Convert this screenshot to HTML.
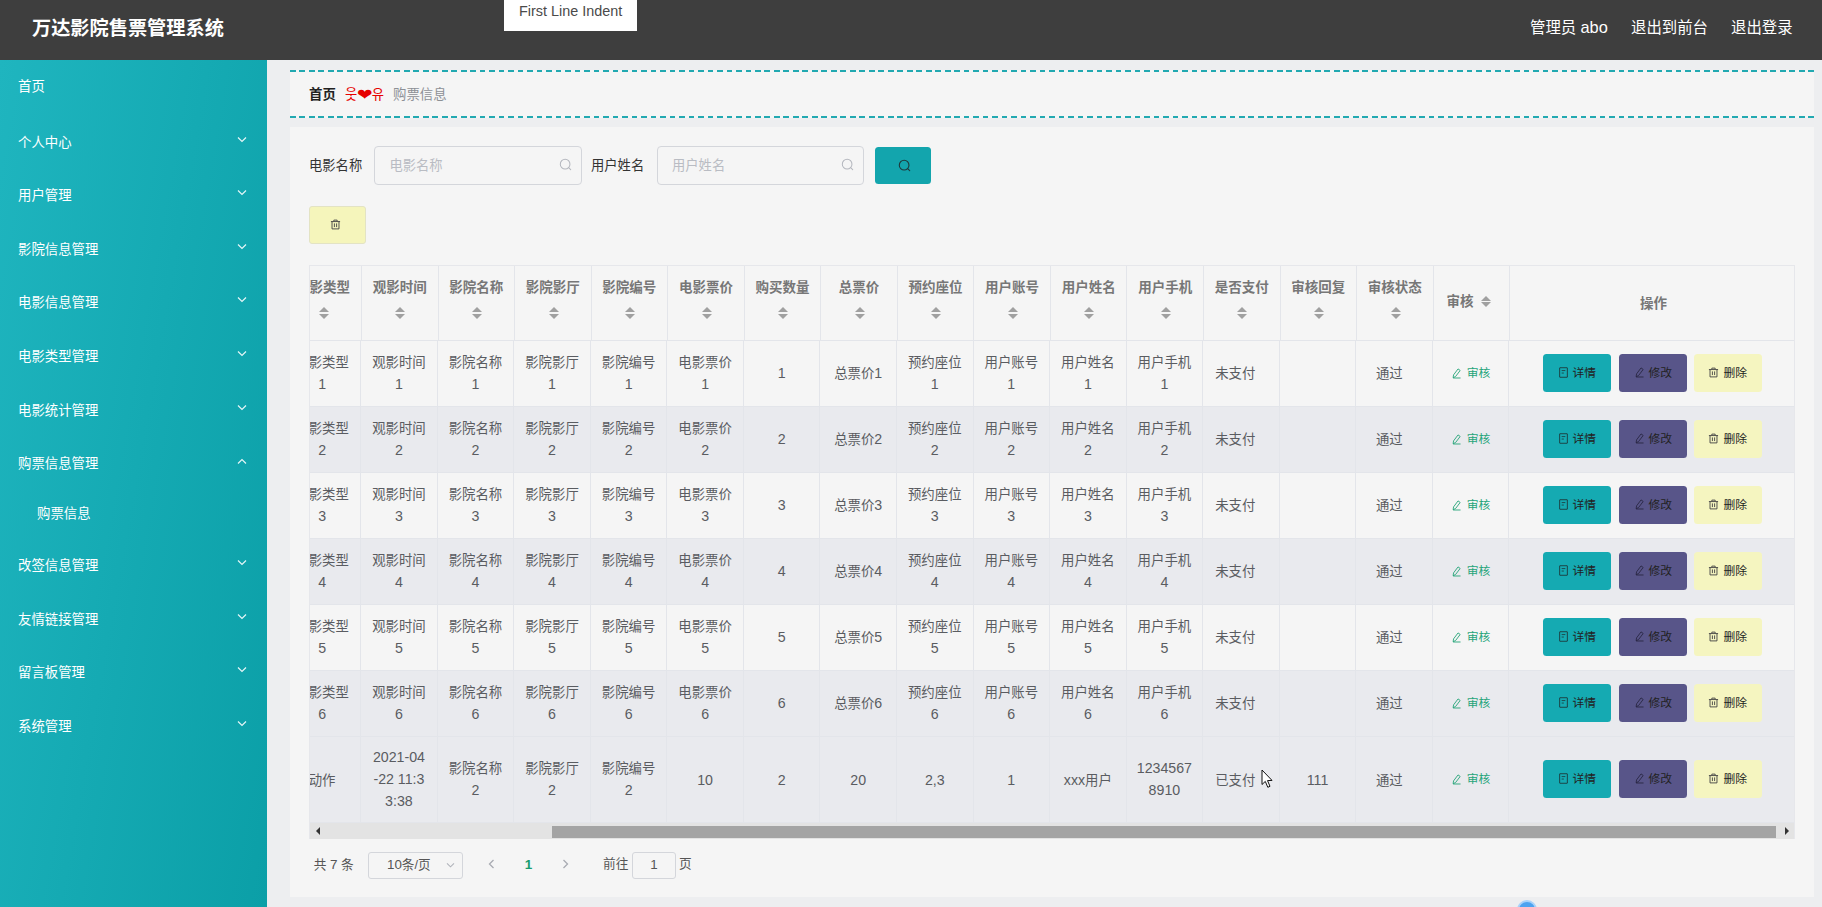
<!DOCTYPE html><html lang="zh-CN"><head><meta charset="utf-8"><title>万达影院售票管理系统</title><style>
*{box-sizing:border-box;margin:0;padding:0}
html,body{width:1822px;height:907px;overflow:hidden}
body{font-family:"Liberation Sans", "Noto Sans CJK SC", "NanumGothic", sans-serif;background:#edeef0;position:relative;color:#333;font-size:13.3px}
svg{display:block}
/* header */
#hd{position:absolute;left:0;top:0;width:1822px;height:60px;background:#3e3e3e}
#hd .title{position:absolute;left:32px;top:0;height:56px;line-height:57.6px;color:#fff;font-weight:700;font-size:19.2px;white-space:nowrap}
#hd .r{position:absolute;top:0;height:54px;line-height:55.4px;color:#fff;font-size:15.4px;white-space:nowrap}
#tip{position:absolute;left:504.1px;top:0;width:133px;height:31.2px;background:#fff;color:#4a4a4a;font-size:14.4px;line-height:22px;text-align:center;font-family:"Liberation Sans",sans-serif}
/* sidebar */
#sb{position:absolute;left:0;top:60px;width:267px;height:847px;background:linear-gradient(100deg,#1fb5bf 0%,#0b9fa7 100%);color:#fff}
#sb .it{position:relative;height:53.6px;line-height:57px;overflow:hidden;padding-left:18px;font-size:13.4px;white-space:nowrap}
#sb .sub{position:relative;height:48.3px;line-height:50.5px;overflow:hidden;padding-left:37px;font-size:13.4px;white-space:nowrap}
#sb .ar{position:absolute;left:237px;top:22px;width:10px;height:8px}
/* panels */
#bc{position:absolute;left:290px;top:70px;width:1524px;height:48px;background:#f5f5f5}
#bc i{position:absolute;left:0;width:1524px;height:2px;background:repeating-linear-gradient(90deg,#22a9b1 0,#22a9b1 5.7px,transparent 5.7px,transparent 9.49px)}
#bc .t{position:absolute;top:1.6px;height:44px;line-height:45.4px;font-size:13.4px;white-space:nowrap}
#mp{position:absolute;left:290px;top:127px;width:1524px;height:770px;background:#f5f5f5}
.lab{position:absolute;font-size:13.3px;color:#333;white-space:nowrap;height:37px;line-height:37px;top:147px}
.inp{position:absolute;top:146.2px;height:38.8px;border:1px solid #d4d6db;border-radius:4px;background:#f5f5f5;color:#b9bcc3;font-size:13.3px;line-height:37.4px;padding-left:14px;white-space:nowrap}
.inp svg{position:absolute;right:9.4px;top:10.8px}
#sbtn{position:absolute;left:874.7px;top:146.8px;width:56.7px;height:37px;background:#13a5ad;border-radius:3.5px}
#dbtn{position:absolute;left:309.4px;top:206.4px;width:56.4px;height:37.4px;background:#f5f5bb;border:1px solid #e3e3c4;border-radius:3px}
/* table */
#tw{position:absolute;left:309px;top:265px;width:1486px;height:574px;overflow:hidden;border-top:1px solid #e6e7eb;border-left:1px solid #e6e7eb;border-right:1px solid #e6e7eb}
.tb{position:absolute;left:-25.1px;top:0;border-collapse:collapse;table-layout:fixed;width:1510.6px}
#tbb{left:-25.9px;top:73.5px}
#tbb tr:first-child td{border-top:1px solid #e3e5ea}
.tb th,.tb td{border-right:1px solid #e3e5ea;border-bottom:1px solid #e3e5ea;text-align:center;vertical-align:middle;font-size:13.5px;line-height:21.6px;padding:0 8px;overflow:hidden}
.tb th{height:74px;color:#777;font-weight:700;background:#f5f5f5;white-space:nowrap}
.tb td{color:#5a5c61;font-weight:400;font-size:13.4px;padding:1.4px 8.5px 0 8.5px;line-height:21.9px}
.tb tr.s td{background:#e9eaee}
.tb tr.n td{background:#f5f5f5}
.tb tr.r td{height:66px}
.tb tr.l td{height:86px}
.so{display:block;width:10.2px;height:12px;margin:8.4px auto 0;position:relative;left:0.8px}
.so i{display:block;width:0;height:0;border-left:5.1px solid transparent;border-right:5.1px solid transparent}
.so i.u{border-bottom:5.2px solid #a0a0a0;margin-bottom:1.5px}
.so i.d{border-top:5.2px solid #a0a0a0}
.d{font-size:1.06em}
.tb td.np{padding:0 8px}
.btns{display:flex;justify-content:flex-start;padding-left:25.6px}
.b{flex:0 0 67.8px;width:67.8px;height:38px;border-radius:3.5px;margin-right:7.6px;display:flex;align-items:center;justify-content:center;font-size:11.8px;color:#222;white-space:nowrap;padding-top:2.6px;position:relative;top:0px}
.b svg{margin-right:4px;position:relative;top:-2px}
.b1{background:#15aab2;margin-right:8.2px}
.b2{background:#585589;margin-right:7.1px}
.b3{background:#f5f5c0}
.chk{color:#27a57a;font-size:11.8px;display:flex;align-items:center;justify-content:center;white-space:nowrap;position:relative;top:1.3px}
.chk svg{margin-right:5px;position:relative;top:-1.2px}
/* scrollbar */
#hs{position:absolute;left:0;top:557px;width:1486px;height:17px;background:#e3e3e3}
#hs .th{position:absolute;left:242px;top:2.6px;width:1224.3px;height:12px;background:#a4a4a4}
/* pagination */
.pg{position:absolute;font-size:12.7px;color:#555;white-space:nowrap;height:27px;line-height:27px;top:851.1px}
.box{position:absolute;top:852px;height:26.6px;border:1px solid #d4d6db;border-radius:3px;background:#f5f5f5;font-size:12.6px;color:#555;line-height:23.2px;text-align:center}
</style></head><body>
<div id="hd"><div class="title">万达影院售票管理系统</div><div class="r" style="left:1530px">管理员 <span style="font-size:16.4px">abo</span></div><div class="r" style="left:1631px">退出到前台</div><div class="r" style="left:1731px">退出登录</div><div id="tip">First Line Indent</div></div>
<div id="sb">
<div class="it" style="line-height:54.2px">首页</div>
<div class="it">个人中心<svg class="ar" viewBox="0 0 10 8" width="10" height="8"><path d="M1 1.5 L5 5.5 L9 1.5" fill="none" stroke="#e6f6f7" stroke-width="1.2"/></svg></div>
<div class="it">用户管理<svg class="ar" viewBox="0 0 10 8" width="10" height="8"><path d="M1 1.5 L5 5.5 L9 1.5" fill="none" stroke="#e6f6f7" stroke-width="1.2"/></svg></div>
<div class="it">影院信息管理<svg class="ar" viewBox="0 0 10 8" width="10" height="8"><path d="M1 1.5 L5 5.5 L9 1.5" fill="none" stroke="#e6f6f7" stroke-width="1.2"/></svg></div>
<div class="it">电影信息管理<svg class="ar" viewBox="0 0 10 8" width="10" height="8"><path d="M1 1.5 L5 5.5 L9 1.5" fill="none" stroke="#e6f6f7" stroke-width="1.2"/></svg></div>
<div class="it">电影类型管理<svg class="ar" viewBox="0 0 10 8" width="10" height="8"><path d="M1 1.5 L5 5.5 L9 1.5" fill="none" stroke="#e6f6f7" stroke-width="1.2"/></svg></div>
<div class="it">电影统计管理<svg class="ar" viewBox="0 0 10 8" width="10" height="8"><path d="M1 1.5 L5 5.5 L9 1.5" fill="none" stroke="#e6f6f7" stroke-width="1.2"/></svg></div>
<div class="it">购票信息管理<svg class="ar" viewBox="0 0 10 8" width="10" height="8"><path d="M1 6.5 L5 2.5 L9 6.5" fill="none" stroke="#e6f6f7" stroke-width="1.2"/></svg></div>
<div class="sub">购票信息</div>
<div class="it">改签信息管理<svg class="ar" viewBox="0 0 10 8" width="10" height="8"><path d="M1 1.5 L5 5.5 L9 1.5" fill="none" stroke="#e6f6f7" stroke-width="1.2"/></svg></div>
<div class="it">友情链接管理<svg class="ar" viewBox="0 0 10 8" width="10" height="8"><path d="M1 1.5 L5 5.5 L9 1.5" fill="none" stroke="#e6f6f7" stroke-width="1.2"/></svg></div>
<div class="it">留言板管理<svg class="ar" viewBox="0 0 10 8" width="10" height="8"><path d="M1 1.5 L5 5.5 L9 1.5" fill="none" stroke="#e6f6f7" stroke-width="1.2"/></svg></div>
<div class="it">系统管理<svg class="ar" viewBox="0 0 10 8" width="10" height="8"><path d="M1 1.5 L5 5.5 L9 1.5" fill="none" stroke="#e6f6f7" stroke-width="1.2"/></svg></div>
</div>
<div id="bc"><i style="top:0"></i><i style="bottom:0"></i><span class="t" style="left:19px;color:#222;font-weight:700">首页</span><span class="t" style="left:55px;color:#e60000;font-weight:400;font-size:13.3px;letter-spacing:0">웃<span style="display:inline-block;font-size:18px;line-height:1;transform:scale(1.04,0.9);position:relative;top:2.4px;margin:0 -0.3px">❤</span>유</span><span class="t" style="left:103px;color:#8d9096">购票信息</span></div>
<div id="mp"></div>
<div class="lab" style="left:309px">电影名称</div>
<div class="inp" style="left:374.4px;width:207.7px">电影名称<svg width="13" height="13" viewBox="0 0 14 14"><circle cx="6.6" cy="6.6" r="5.2" fill="none" stroke="#b4b7be" stroke-width="1.1"/><path d="M10.4 10.4 L12.6 12.6" stroke="#b4b7be" stroke-width="1.1" stroke-linecap="round"/></svg></div>
<div class="lab" style="left:591px">用户姓名</div>
<div class="inp" style="left:657px;width:207px">用户姓名<svg width="13" height="13" viewBox="0 0 14 14"><circle cx="6.6" cy="6.6" r="5.2" fill="none" stroke="#b4b7be" stroke-width="1.1"/><path d="M10.4 10.4 L12.6 12.6" stroke="#b4b7be" stroke-width="1.1" stroke-linecap="round"/></svg></div>
<div id="sbtn"><div style="position:absolute;left:23px;top:12px"><svg width="13" height="13" viewBox="0 0 14 14"><circle cx="6.6" cy="6.6" r="5.2" fill="none" stroke="#1f3a3c" stroke-width="1.2"/><path d="M10.4 10.4 L12.6 12.6" stroke="#1f3a3c" stroke-width="1.2" stroke-linecap="round"/></svg></div></div>
<div id="dbtn"><div style="position:absolute;left:20px;top:12px"><svg width="11" height="11" viewBox="0 0 12 12" fill="none" stroke="#444" stroke-width="1"><path d="M1 2.8 H11"/><path d="M4.2 2.6 V1.2 H7.8 V2.6"/><path d="M2.2 2.8 V10.8 H9.8 V2.8"/><path d="M4.8 4.8 V8.8 M7.2 4.8 V8.8"/></svg></div></div>
<div id="tw"><table id="tbh" class="tb"><colgroup><col style="width:76.55px"><col style="width:76.55px"><col style="width:76.55px"><col style="width:76.55px"><col style="width:76.55px"><col style="width:76.55px"><col style="width:76.55px"><col style="width:76.55px"><col style="width:76.55px"><col style="width:76.55px"><col style="width:76.55px"><col style="width:76.55px"><col style="width:76.55px"><col style="width:76.55px"><col style="width:76.55px"><col style="width:76.55px"><col style="width:285.8px"></colgroup>
<thead><tr>
<th><div style="margin-top:-9px">电影类型<span class="so"><i class="u"></i><i class="d"></i></span></div></th>
<th><div style="margin-top:-9px">观影时间<span class="so"><i class="u"></i><i class="d"></i></span></div></th>
<th><div style="margin-top:-9px">影院名称<span class="so"><i class="u"></i><i class="d"></i></span></div></th>
<th><div style="margin-top:-9px">影院影厅<span class="so"><i class="u"></i><i class="d"></i></span></div></th>
<th><div style="margin-top:-9px">影院编号<span class="so"><i class="u"></i><i class="d"></i></span></div></th>
<th><div style="margin-top:-9px">电影票价<span class="so"><i class="u"></i><i class="d"></i></span></div></th>
<th><div style="margin-top:-9px">购买数量<span class="so"><i class="u"></i><i class="d"></i></span></div></th>
<th><div style="margin-top:-9px">总票价<span class="so"><i class="u"></i><i class="d"></i></span></div></th>
<th><div style="margin-top:-9px">预约座位<span class="so"><i class="u"></i><i class="d"></i></span></div></th>
<th><div style="margin-top:-9px">用户账号<span class="so"><i class="u"></i><i class="d"></i></span></div></th>
<th><div style="margin-top:-9px">用户姓名<span class="so"><i class="u"></i><i class="d"></i></span></div></th>
<th><div style="margin-top:-9px">用户手机<span class="so"><i class="u"></i><i class="d"></i></span></div></th>
<th><div style="margin-top:-9px">是否支付<span class="so"><i class="u"></i><i class="d"></i></span></div></th>
<th><div style="margin-top:-9px">审核回复<span class="so"><i class="u"></i><i class="d"></i></span></div></th>
<th><div style="margin-top:-9px">审核状态<span class="so"><i class="u"></i><i class="d"></i></span></div></th>
<th><div style="display:flex;align-items:center;justify-content:flex-start;padding-left:5px;margin-top:-2px">审核<span class="so" style="margin:0 0 0 7px"><i class="u"></i><i class="d"></i></span></div></th>
<th><div style="padding:1.4px 0 0 2px">操作</div></th></tr></thead></table>
<table id="tbb" class="tb"><colgroup><col style="width:76.55px"><col style="width:76.55px"><col style="width:76.55px"><col style="width:76.55px"><col style="width:76.55px"><col style="width:76.55px"><col style="width:76.55px"><col style="width:76.55px"><col style="width:76.55px"><col style="width:76.55px"><col style="width:76.55px"><col style="width:76.55px"><col style="width:76.55px"><col style="width:76.55px"><col style="width:76.55px"><col style="width:76.55px"><col style="width:285.8px"></colgroup><tbody>
<tr class="r n">
<td>电影类型<br><span class="d">1</span></td>
<td>观影时间<br><span class="d">1</span></td>
<td>影院名称<br><span class="d">1</span></td>
<td>影院影厅<br><span class="d">1</span></td>
<td>影院编号<br><span class="d">1</span></td>
<td>电影票价<br><span class="d">1</span></td>
<td><span class="d">1</span></td>
<td>总票价<span class="d">1</span></td>
<td>预约座位<br><span class="d">1</span></td>
<td>用户账号<br><span class="d">1</span></td>
<td>用户姓名<br><span class="d">1</span></td>
<td>用户手机<br><span class="d">1</span></td>
<td style="text-align:left;padding-left:12px">未支付</td><td></td><td style="padding-right:18px">通过</td>
<td class="np"><div class="chk"><svg width="11" height="11" viewBox="0 0 12 12" fill="none" stroke="#27a57a" stroke-width="1" stroke-linejoin="round"><path d="M7.7 1 L10 2.7 L5 9.3 L2.3 10.6 L2.8 7.5 Z"/><path d="M2.3 10.9 H10.4"/></svg>审核</div></td>
<td class="np"><div class="btns"><div class="b b1"><svg width="11" height="11" viewBox="0 0 12 12" fill="none" stroke="#1d3b3d" stroke-width="1"><rect x="1.8" y="0.8" width="8.4" height="10.4" rx="0.3"/><path d="M4 3.9 H8 M4 6.6 H6.4" stroke-width="0.9"/></svg>详情</div><div class="b b2"><svg width="11" height="11" viewBox="0 0 12 12" fill="none" stroke="#2a2744" stroke-width="1" stroke-linejoin="round"><path d="M7.7 1 L10 2.7 L5 9.3 L2.3 10.6 L2.8 7.5 Z"/><path d="M2.3 10.9 H10.4"/></svg>修改</div><div class="b b3"><svg width="11" height="11" viewBox="0 0 12 12" fill="none" stroke="#444" stroke-width="1"><path d="M1 2.8 H11"/><path d="M4.2 2.6 V1.2 H7.8 V2.6"/><path d="M2.2 2.8 V10.8 H9.8 V2.8"/><path d="M4.8 4.8 V8.8 M7.2 4.8 V8.8"/></svg>删除</div></div></td>
</tr>
<tr class="r s">
<td>电影类型<br><span class="d">2</span></td>
<td>观影时间<br><span class="d">2</span></td>
<td>影院名称<br><span class="d">2</span></td>
<td>影院影厅<br><span class="d">2</span></td>
<td>影院编号<br><span class="d">2</span></td>
<td>电影票价<br><span class="d">2</span></td>
<td><span class="d">2</span></td>
<td>总票价<span class="d">2</span></td>
<td>预约座位<br><span class="d">2</span></td>
<td>用户账号<br><span class="d">2</span></td>
<td>用户姓名<br><span class="d">2</span></td>
<td>用户手机<br><span class="d">2</span></td>
<td style="text-align:left;padding-left:12px">未支付</td><td></td><td style="padding-right:18px">通过</td>
<td class="np"><div class="chk"><svg width="11" height="11" viewBox="0 0 12 12" fill="none" stroke="#27a57a" stroke-width="1" stroke-linejoin="round"><path d="M7.7 1 L10 2.7 L5 9.3 L2.3 10.6 L2.8 7.5 Z"/><path d="M2.3 10.9 H10.4"/></svg>审核</div></td>
<td class="np"><div class="btns"><div class="b b1"><svg width="11" height="11" viewBox="0 0 12 12" fill="none" stroke="#1d3b3d" stroke-width="1"><rect x="1.8" y="0.8" width="8.4" height="10.4" rx="0.3"/><path d="M4 3.9 H8 M4 6.6 H6.4" stroke-width="0.9"/></svg>详情</div><div class="b b2"><svg width="11" height="11" viewBox="0 0 12 12" fill="none" stroke="#2a2744" stroke-width="1" stroke-linejoin="round"><path d="M7.7 1 L10 2.7 L5 9.3 L2.3 10.6 L2.8 7.5 Z"/><path d="M2.3 10.9 H10.4"/></svg>修改</div><div class="b b3"><svg width="11" height="11" viewBox="0 0 12 12" fill="none" stroke="#444" stroke-width="1"><path d="M1 2.8 H11"/><path d="M4.2 2.6 V1.2 H7.8 V2.6"/><path d="M2.2 2.8 V10.8 H9.8 V2.8"/><path d="M4.8 4.8 V8.8 M7.2 4.8 V8.8"/></svg>删除</div></div></td>
</tr>
<tr class="r n">
<td>电影类型<br><span class="d">3</span></td>
<td>观影时间<br><span class="d">3</span></td>
<td>影院名称<br><span class="d">3</span></td>
<td>影院影厅<br><span class="d">3</span></td>
<td>影院编号<br><span class="d">3</span></td>
<td>电影票价<br><span class="d">3</span></td>
<td><span class="d">3</span></td>
<td>总票价<span class="d">3</span></td>
<td>预约座位<br><span class="d">3</span></td>
<td>用户账号<br><span class="d">3</span></td>
<td>用户姓名<br><span class="d">3</span></td>
<td>用户手机<br><span class="d">3</span></td>
<td style="text-align:left;padding-left:12px">未支付</td><td></td><td style="padding-right:18px">通过</td>
<td class="np"><div class="chk"><svg width="11" height="11" viewBox="0 0 12 12" fill="none" stroke="#27a57a" stroke-width="1" stroke-linejoin="round"><path d="M7.7 1 L10 2.7 L5 9.3 L2.3 10.6 L2.8 7.5 Z"/><path d="M2.3 10.9 H10.4"/></svg>审核</div></td>
<td class="np"><div class="btns"><div class="b b1"><svg width="11" height="11" viewBox="0 0 12 12" fill="none" stroke="#1d3b3d" stroke-width="1"><rect x="1.8" y="0.8" width="8.4" height="10.4" rx="0.3"/><path d="M4 3.9 H8 M4 6.6 H6.4" stroke-width="0.9"/></svg>详情</div><div class="b b2"><svg width="11" height="11" viewBox="0 0 12 12" fill="none" stroke="#2a2744" stroke-width="1" stroke-linejoin="round"><path d="M7.7 1 L10 2.7 L5 9.3 L2.3 10.6 L2.8 7.5 Z"/><path d="M2.3 10.9 H10.4"/></svg>修改</div><div class="b b3"><svg width="11" height="11" viewBox="0 0 12 12" fill="none" stroke="#444" stroke-width="1"><path d="M1 2.8 H11"/><path d="M4.2 2.6 V1.2 H7.8 V2.6"/><path d="M2.2 2.8 V10.8 H9.8 V2.8"/><path d="M4.8 4.8 V8.8 M7.2 4.8 V8.8"/></svg>删除</div></div></td>
</tr>
<tr class="r s">
<td>电影类型<br><span class="d">4</span></td>
<td>观影时间<br><span class="d">4</span></td>
<td>影院名称<br><span class="d">4</span></td>
<td>影院影厅<br><span class="d">4</span></td>
<td>影院编号<br><span class="d">4</span></td>
<td>电影票价<br><span class="d">4</span></td>
<td><span class="d">4</span></td>
<td>总票价<span class="d">4</span></td>
<td>预约座位<br><span class="d">4</span></td>
<td>用户账号<br><span class="d">4</span></td>
<td>用户姓名<br><span class="d">4</span></td>
<td>用户手机<br><span class="d">4</span></td>
<td style="text-align:left;padding-left:12px">未支付</td><td></td><td style="padding-right:18px">通过</td>
<td class="np"><div class="chk"><svg width="11" height="11" viewBox="0 0 12 12" fill="none" stroke="#27a57a" stroke-width="1" stroke-linejoin="round"><path d="M7.7 1 L10 2.7 L5 9.3 L2.3 10.6 L2.8 7.5 Z"/><path d="M2.3 10.9 H10.4"/></svg>审核</div></td>
<td class="np"><div class="btns"><div class="b b1"><svg width="11" height="11" viewBox="0 0 12 12" fill="none" stroke="#1d3b3d" stroke-width="1"><rect x="1.8" y="0.8" width="8.4" height="10.4" rx="0.3"/><path d="M4 3.9 H8 M4 6.6 H6.4" stroke-width="0.9"/></svg>详情</div><div class="b b2"><svg width="11" height="11" viewBox="0 0 12 12" fill="none" stroke="#2a2744" stroke-width="1" stroke-linejoin="round"><path d="M7.7 1 L10 2.7 L5 9.3 L2.3 10.6 L2.8 7.5 Z"/><path d="M2.3 10.9 H10.4"/></svg>修改</div><div class="b b3"><svg width="11" height="11" viewBox="0 0 12 12" fill="none" stroke="#444" stroke-width="1"><path d="M1 2.8 H11"/><path d="M4.2 2.6 V1.2 H7.8 V2.6"/><path d="M2.2 2.8 V10.8 H9.8 V2.8"/><path d="M4.8 4.8 V8.8 M7.2 4.8 V8.8"/></svg>删除</div></div></td>
</tr>
<tr class="r n">
<td>电影类型<br><span class="d">5</span></td>
<td>观影时间<br><span class="d">5</span></td>
<td>影院名称<br><span class="d">5</span></td>
<td>影院影厅<br><span class="d">5</span></td>
<td>影院编号<br><span class="d">5</span></td>
<td>电影票价<br><span class="d">5</span></td>
<td><span class="d">5</span></td>
<td>总票价<span class="d">5</span></td>
<td>预约座位<br><span class="d">5</span></td>
<td>用户账号<br><span class="d">5</span></td>
<td>用户姓名<br><span class="d">5</span></td>
<td>用户手机<br><span class="d">5</span></td>
<td style="text-align:left;padding-left:12px">未支付</td><td></td><td style="padding-right:18px">通过</td>
<td class="np"><div class="chk"><svg width="11" height="11" viewBox="0 0 12 12" fill="none" stroke="#27a57a" stroke-width="1" stroke-linejoin="round"><path d="M7.7 1 L10 2.7 L5 9.3 L2.3 10.6 L2.8 7.5 Z"/><path d="M2.3 10.9 H10.4"/></svg>审核</div></td>
<td class="np"><div class="btns"><div class="b b1"><svg width="11" height="11" viewBox="0 0 12 12" fill="none" stroke="#1d3b3d" stroke-width="1"><rect x="1.8" y="0.8" width="8.4" height="10.4" rx="0.3"/><path d="M4 3.9 H8 M4 6.6 H6.4" stroke-width="0.9"/></svg>详情</div><div class="b b2"><svg width="11" height="11" viewBox="0 0 12 12" fill="none" stroke="#2a2744" stroke-width="1" stroke-linejoin="round"><path d="M7.7 1 L10 2.7 L5 9.3 L2.3 10.6 L2.8 7.5 Z"/><path d="M2.3 10.9 H10.4"/></svg>修改</div><div class="b b3"><svg width="11" height="11" viewBox="0 0 12 12" fill="none" stroke="#444" stroke-width="1"><path d="M1 2.8 H11"/><path d="M4.2 2.6 V1.2 H7.8 V2.6"/><path d="M2.2 2.8 V10.8 H9.8 V2.8"/><path d="M4.8 4.8 V8.8 M7.2 4.8 V8.8"/></svg>删除</div></div></td>
</tr>
<tr class="r s">
<td>电影类型<br><span class="d">6</span></td>
<td>观影时间<br><span class="d">6</span></td>
<td>影院名称<br><span class="d">6</span></td>
<td>影院影厅<br><span class="d">6</span></td>
<td>影院编号<br><span class="d">6</span></td>
<td>电影票价<br><span class="d">6</span></td>
<td><span class="d">6</span></td>
<td>总票价<span class="d">6</span></td>
<td>预约座位<br><span class="d">6</span></td>
<td>用户账号<br><span class="d">6</span></td>
<td>用户姓名<br><span class="d">6</span></td>
<td>用户手机<br><span class="d">6</span></td>
<td style="text-align:left;padding-left:12px">未支付</td><td></td><td style="padding-right:18px">通过</td>
<td class="np"><div class="chk"><svg width="11" height="11" viewBox="0 0 12 12" fill="none" stroke="#27a57a" stroke-width="1" stroke-linejoin="round"><path d="M7.7 1 L10 2.7 L5 9.3 L2.3 10.6 L2.8 7.5 Z"/><path d="M2.3 10.9 H10.4"/></svg>审核</div></td>
<td class="np"><div class="btns"><div class="b b1"><svg width="11" height="11" viewBox="0 0 12 12" fill="none" stroke="#1d3b3d" stroke-width="1"><rect x="1.8" y="0.8" width="8.4" height="10.4" rx="0.3"/><path d="M4 3.9 H8 M4 6.6 H6.4" stroke-width="0.9"/></svg>详情</div><div class="b b2"><svg width="11" height="11" viewBox="0 0 12 12" fill="none" stroke="#2a2744" stroke-width="1" stroke-linejoin="round"><path d="M7.7 1 L10 2.7 L5 9.3 L2.3 10.6 L2.8 7.5 Z"/><path d="M2.3 10.9 H10.4"/></svg>修改</div><div class="b b3"><svg width="11" height="11" viewBox="0 0 12 12" fill="none" stroke="#444" stroke-width="1"><path d="M1 2.8 H11"/><path d="M4.2 2.6 V1.2 H7.8 V2.6"/><path d="M2.2 2.8 V10.8 H9.8 V2.8"/><path d="M4.8 4.8 V8.8 M7.2 4.8 V8.8"/></svg>删除</div></div></td>
</tr>
<tr class="l s">
<td style="padding-top:3px">动作</td>
<td><span class="d">2021-04</span><br><span class="d">-22 11:3</span><br><span class="d">3:38</span></td>
<td>影院名称<br><span class="d">2</span></td>
<td>影院影厅<br><span class="d">2</span></td>
<td>影院编号<br><span class="d">2</span></td>
<td style="padding-top:3px"><span class="d">10</span></td>
<td style="padding-top:3px"><span class="d">2</span></td>
<td style="padding-top:3px"><span class="d">20</span></td>
<td style="padding-top:3px"><span class="d">2,3</span></td>
<td style="padding-top:3px"><span class="d">1</span></td>
<td style="padding-top:3px"><span class="d">xxx</span>用户</td>
<td><span class="d">1234567</span><br><span class="d">8910</span></td>
<td style="text-align:left;padding-left:12px;padding-top:3px">已支付</td><td style="padding-top:3px"><span class="d">111</span></td><td style="padding-right:18px;padding-top:3px">通过</td>
<td class="np"><div class="chk"><svg width="11" height="11" viewBox="0 0 12 12" fill="none" stroke="#27a57a" stroke-width="1" stroke-linejoin="round"><path d="M7.7 1 L10 2.7 L5 9.3 L2.3 10.6 L2.8 7.5 Z"/><path d="M2.3 10.9 H10.4"/></svg>审核</div></td>
<td class="np"><div class="btns"><div class="b b1"><svg width="11" height="11" viewBox="0 0 12 12" fill="none" stroke="#1d3b3d" stroke-width="1"><rect x="1.8" y="0.8" width="8.4" height="10.4" rx="0.3"/><path d="M4 3.9 H8 M4 6.6 H6.4" stroke-width="0.9"/></svg>详情</div><div class="b b2"><svg width="11" height="11" viewBox="0 0 12 12" fill="none" stroke="#2a2744" stroke-width="1" stroke-linejoin="round"><path d="M7.7 1 L10 2.7 L5 9.3 L2.3 10.6 L2.8 7.5 Z"/><path d="M2.3 10.9 H10.4"/></svg>修改</div><div class="b b3"><svg width="11" height="11" viewBox="0 0 12 12" fill="none" stroke="#444" stroke-width="1"><path d="M1 2.8 H11"/><path d="M4.2 2.6 V1.2 H7.8 V2.6"/><path d="M2.2 2.8 V10.8 H9.8 V2.8"/><path d="M4.8 4.8 V8.8 M7.2 4.8 V8.8"/></svg>删除</div></div></td>
</tr>
</tbody></table>
<div id="hs"><div class="th"></div><svg style="position:absolute;left:5px;top:4px" width="6" height="8" viewBox="0 0 6 8"><path d="M5 0 L1 4 L5 8 Z" fill="#333"/></svg><svg style="position:absolute;left:1474px;top:4px" width="6" height="8" viewBox="0 0 6 8"><path d="M1 0 L5 4 L1 8 Z" fill="#333"/></svg></div></div>
<div class="pg" style="left:313.8px">共 <span class="d">7</span> 条</div>
<div class="box" style="left:368px;width:95px;text-align:left;padding-left:18px"><span class="d">10</span>条/页<svg style="position:absolute;right:7px;top:9px" width="9" height="7" viewBox="0 0 10 8"><path d="M1 1.5 L5 5.5 L9 1.5" fill="none" stroke="#b0b3ba" stroke-width="1.2"/></svg></div>
<svg style="position:absolute;left:488px;top:859px" width="7" height="10" viewBox="0 0 7 10"><path d="M5.5 1 L1.5 5 L5.5 9" fill="none" stroke="#a8abb2" stroke-width="1.3"/></svg>
<div class="pg" style="left:524.8px;color:#1a9c6e;font-weight:700"><span class="d">1</span></div>
<svg style="position:absolute;left:562px;top:859px" width="7" height="10" viewBox="0 0 7 10"><path d="M1.5 1 L5.5 5 L1.5 9" fill="none" stroke="#a8abb2" stroke-width="1.3"/></svg>
<div class="pg" style="left:603px">前往</div>
<div class="box" style="left:632px;width:44px"><span class="d">1</span></div>
<div class="pg" style="left:679px">页</div>
<svg style="position:absolute;left:1261px;top:769px" width="13" height="20" viewBox="0 0 13 20"><path d="M1 1 L1 15.5 L4.3 12.4 L6.8 18.3 L9 17.3 L6.5 11.6 L11 11.4 Z" fill="#fff" stroke="#111" stroke-width="1" stroke-linejoin="round"/></svg>
<div style="position:absolute;left:1517px;top:900px;width:20px;height:20px;border-radius:10px;background:#4da3f0;border:2px solid #a8d2fa"></div>
</body></html>
